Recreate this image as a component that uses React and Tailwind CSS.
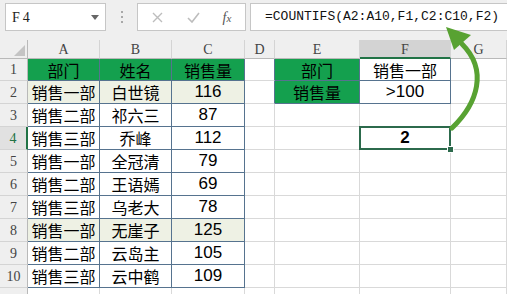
import React from "react";

const data = [
  ["销售一部", "白世镜", 116, true],
  ["销售二部", "祁六三", 87],
  ["销售三部", "乔峰", 112],
  ["销售一部", "全冠清", 79],
  ["销售二部", "王语嫣", 69],
  ["销售三部", "乌老大", 78],
  ["销售一部", "无崖子", 125, true],
  ["销售二部", "云岛主", 105],
  ["销售三部", "云中鹤", 109],
];

const cjk = "font-['Noto_Sans_CJK_SC',sans-serif] text-[16px] text-black";
const num = "font-['Liberation_Sans',Arial,sans-serif] text-[17px] text-black";
const hdr = "font-['Liberation_Serif','DejaVu_Serif',serif] text-[14px] leading-none text-[#444]";

function Cell({ className = "", children }) {
  return (
    <div className={"flex items-center justify-center border-r border-b overflow-hidden whitespace-nowrap " + className}>
      {children}
    </div>
  );
}

function ColHead({ label, active }) {
  return (
    <div
      className={
        "flex items-center justify-center pt-[2px] border-r border-[#d4d4d4] " +
        hdr +
        (active ? " bg-[#d3d3d3] border-b-2 border-b-[#217346] text-[#3a6a50]" : " bg-[#efefef] border-b border-b-[#b9b9b9]")
      }
    >
      {label}
    </div>
  );
}

function RowHead({ n, active }) {
  return (
    <div
      className={
        "flex items-end justify-center pb-[3px] border-b border-[#d4d4d4] " +
        hdr +
        (active
          ? " bg-[#e1e1e1] border-r-2 border-r-[#217346] text-[#217346]"
          : " bg-[#efefef] border-r border-r-[#b9b9b9]")
      }
    >
      {n}
    </div>
  );
}

export default function App() {
  const T = "border-[#56738f]";
  const G = "border-[#d9d9d9]";
  const rows = [];
  rows.push(
    <React.Fragment key="r1">
      <RowHead n={1} />
      <Cell className={`${T} bg-[#14a04e] ${cjk}`}>部门</Cell>
      <Cell className={`${T} bg-[#14a04e] ${cjk}`}>姓名</Cell>
      <Cell className={`${T} bg-[#14a04e] ${cjk}`}>销售量</Cell>
      <Cell className={`border-r-[#56738f] border-b-[#d9d9d9]`} />
      <Cell className={`${T} bg-[#14a04e] ${cjk}`}>部门</Cell>
      <Cell className={`${T} bg-white ${cjk}`}>销售一部</Cell>
      <Cell className={G} />
    </React.Fragment>
  );
  data.forEach((d, i) => {
    const r = i + 2;
    const fill = d[3] ? "bg-[#eef1e4]" : "bg-white";
    let rest;
    if (r === 2) {
      rest = (
        <>
          <Cell className={`border-r-[#56738f] border-b-[#d9d9d9]`} />
          <Cell className={`${T} bg-[#14a04e] ${cjk}`}>销售量</Cell>
          <Cell className={`${T} ${num}`}>&gt;100</Cell>
          <Cell className={G} />
        </>
      );
    } else if (r === 4) {
      rest = (
        <>
          <Cell className={G} />
          <Cell className={G} />
          <div className="relative flex items-center justify-center border-r border-b border-[#d9d9d9]">
            <span className="font-['Liberation_Sans',Arial,sans-serif] text-[17px] font-bold text-black">2</span>
            <div className="absolute -left-[1px] -top-[1px] right-[-1px] bottom-[-1px] border-2 border-[#2c6a4c]" />
            <div className="absolute right-[-4px] bottom-[-4px] w-[7px] h-[7px] bg-[#2c6a4c] border border-white" />
          </div>
          <Cell className={G} />
        </>
      );
    } else {
      rest = (
        <>
          <Cell className={G} />
          <Cell className={G} />
          <Cell className={G} />
          <Cell className={G} />
        </>
      );
    }
    rows.push(
      <React.Fragment key={"r" + r}>
        <RowHead n={r} active={r === 4} />
        <Cell className={`${T} ${fill} ${cjk}`}>{d[0]}</Cell>
        <Cell className={`${T} ${fill} ${cjk}`}>{d[1]}</Cell>
        <Cell className={`${T} ${fill} ${num}`}>{d[2]}</Cell>
        {rest}
      </React.Fragment>
    );
  });
  rows.push(
    <React.Fragment key="r11">
      <div className="bg-[#efefef] border-r border-[#b9b9b9]" />
      <Cell className={G} />
      <Cell className={G} />
      <Cell className={G} />
      <Cell className={G} />
      <Cell className={G} />
      <Cell className={G} />
      <Cell className={G} />
    </React.Fragment>
  );

  return (
    <div className="relative w-[507px] h-[294px] overflow-hidden bg-white">
      {/* formula bar */}
      <div className="h-[40px] bg-[#efefef] flex items-start pt-[3px]">
        <div className="ml-[5px] w-[101px] h-[28px] bg-white border border-[#c6c6c6] flex items-center justify-between pl-[6px] pr-[6px]">
          <span className="font-['Liberation_Serif',serif] text-[14px] text-[#222] tracking-[3px]">F4</span>
          <svg width="8" height="5" viewBox="0 0 8 5"><path d="M0 0 H8 L4 5 Z" fill="#666" /></svg>
        </div>
        <div className="w-[31px] h-[28px] flex flex-col items-center justify-center gap-[3px]">
          <div className="w-[2px] h-[2px] bg-[#a8a8a8]" />
          <div className="w-[2px] h-[2px] bg-[#a8a8a8]" />
          <div className="w-[2px] h-[2px] bg-[#a8a8a8]" />
        </div>
        <div className="w-[109px] h-[28px] bg-white border border-[#c6c6c6] flex items-center">
          <div className="w-[38px] flex justify-center">
            <svg width="11" height="11" viewBox="0 0 11 11"><path d="M1 1 L10 10 M10 1 L1 10" stroke="#bdbdbd" strokeWidth="1.4" /></svg>
          </div>
          <div className="w-[34px] flex justify-center">
            <svg width="13" height="11" viewBox="0 0 13 11"><path d="M1 6 L5 10 L12 1" stroke="#bdbdbd" strokeWidth="1.6" fill="none" /></svg>
          </div>
          <div className="w-[34px] flex justify-center">
            <span className="font-['Liberation_Serif',serif] italic text-[14px] text-[#555]">f<span className="text-[11px]">x</span></span>
          </div>
        </div>
        <div className="ml-[4px] flex-1 h-[28px] bg-white border border-[#c6c6c6] border-r-0 flex items-center pl-[14px]">
          <span className="font-['Liberation_Mono',monospace] text-[13px] text-[#111] whitespace-nowrap">=COUNTIFS(A2:A10,F1,C2:C10,F2)</span>
        </div>
      </div>

      {/* sheet grid */}
      <div className="grid grid-cols-[28px_72px_72px_73px_30px_85px_91px_56px] grid-rows-[19px_22px_repeat(10,23px)]">
        <div className="relative bg-[#efefef] border-r border-b border-[#b9b9b9]">
          <svg className="absolute right-[2px] bottom-[2px]" width="11" height="11" viewBox="0 0 11 11"><path d="M11 0 V11 H0 Z" fill="#c4c4c4" /></svg>
        </div>
        <ColHead label="A" />
        <ColHead label="B" />
        <ColHead label="C" />
        <ColHead label="D" />
        <ColHead label="E" />
        <ColHead label="F" active />
        <ColHead label="G" />
        {rows}
      </div>

      {/* green arrow */}
      <svg className="absolute left-0 top-0 pointer-events-none" width="507" height="294" viewBox="0 0 507 294">
        <path d="M452 128 C 478 103 488 70 462 44" stroke="#58a232" strokeWidth="5" fill="none" strokeLinecap="round" />
        <path d="M446 27 L471 35 L454 50 Z" fill="#58a232" />
      </svg>
    </div>
  );
}
